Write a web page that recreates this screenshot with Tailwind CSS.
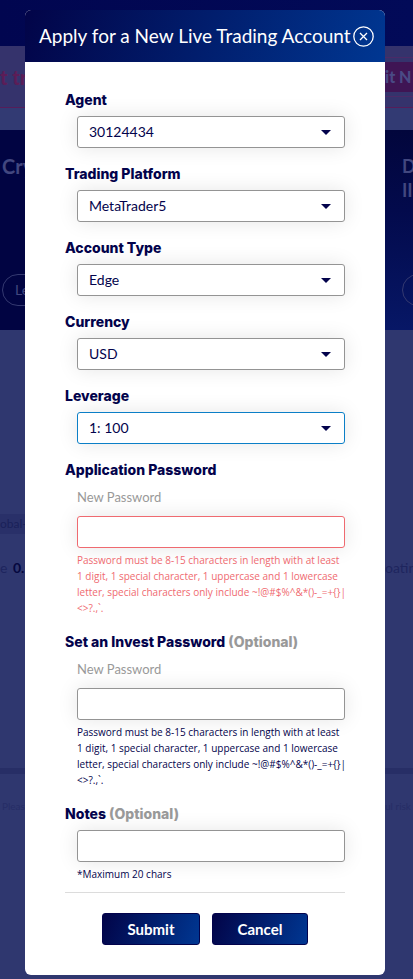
<!DOCTYPE html>
<html lang="en">
  <head>
    <meta charset="UTF-8" />
    <meta name="viewport" content="width=device-width, initial-scale=1.0" />
    <title>Apply for a New Live Trading Account</title>
    <script src="https://cdn.jsdelivr.net/npm/@tailwindcss/browser@4"></script>
  </head>
  <body class="relative min-h-screen bg-[#2f376f] font-['Lato',sans-serif] text-[#03034c]">
    <!-- Dimmed page -->
    <div class="absolute inset-0 overflow-hidden whitespace-nowrap" aria-hidden="true">
      <div class="h-[46px] bg-linear-to-r from-[#010650] to-[#020a58]"></div>
      <div class="flex h-[62px] items-center justify-between border-b border-[#561d5a] bg-[#35336c]">
        <span class="w-[25px] text-xl font-black text-[#5b1d57]">t tr</span>
        <div class="flex h-10 w-7 items-center border-y border-[#4b2a68]">
          <span class="h-[30px] w-full bg-[#3f1554] text-base leading-[30px] font-black text-[#4a4a85]">it N</span>
        </div>
      </div>
      <div class="h-[22px] bg-[#323a73]"></div>
      <div class="flex h-[200px] justify-between bg-[#010442] text-[#42477f]">
        <div class="flex w-[25px] flex-col pt-6 pl-0.5">
          <span class="text-xl leading-6 font-bold">Cry</span>
          <div class="mt-[96px] h-8 w-24 rounded-full border border-[#343970] pl-3 text-sm leading-[30px]">Learn</div>
        </div>
        <div class="flex w-7 flex-col bg-linear-to-b from-[#02063c] via-[#030a4c] via-40% to-[#071766] pt-6 pl-[17px]">
          <span class="text-lg leading-6 font-bold">D</span>
          <span class="text-lg leading-6 font-bold">II</span>
          <div class="mt-[72px] h-8 w-24 rounded-full border border-[#343970]"></div>
        </div>
      </div>
      <div class="mt-[184px] h-5 w-[25px] bg-[#293069] text-xs leading-5 text-[#1a2159]">obal-</div>
      <div class="mt-[22px] flex justify-between text-sm leading-6 text-[#1e255e]">
        <span class="w-[25px]">e <b class="pl-0.5 text-[#05083f]">0.</b></span>
        <span class="w-7">oatin</span>
      </div>
      <div class="mt-[188px] h-1.5 bg-[#272e66]"></div>
      <div class="mt-6 flex justify-between text-[10px] leading-4 text-[#262d66]">
        <span class="w-[25px] pl-0.5">Please</span>
        <span class="w-7">ul risk</span>
      </div>
    </div>

    <!-- Modal -->
    <div class="relative pt-[10px] pr-7 pb-1 pl-[25px]">
      <div role="dialog" aria-labelledby="title" class="overflow-hidden rounded-md bg-white">
        <div class="flex h-[52px] items-center justify-between bg-linear-[110deg] from-[#020448] to-[#003792] pr-[11px] pl-[14px]">
          <h1 id="title" class="text-[19px] leading-6 whitespace-nowrap text-white">Apply for a New Live Trading Account</h1>
          <button type="button" aria-label="Close" class="-ml-1 shrink-0 text-white">
            <svg class="block size-[21px]" viewBox="0 0 21 21" fill="none" stroke="currentColor">
              <circle cx="10.5" cy="10.5" r="9.7" stroke-width="1.3" />
              <path d="M7 7l7 7M14 7l-7 7" stroke-width="1.3" />
            </svg>
          </button>
        </div>

        <form class="px-10 pt-7 pb-[30px]">
          <div class="flex flex-col gap-4">
            <div>
              <label for="agent" class="mb-1.5 block font-['Inter',sans-serif] text-sm leading-5 font-extrabold">Agent</label>
              <div class="relative ml-3">
                <select id="agent" class="block h-8 w-full appearance-none rounded-[3px] border border-[#949494] bg-white px-[11px] text-sm shadow-[0_0_20px_rgba(0,0,0,0.1)] outline-none">
                  <option>30124434</option>
                </select>
                <svg class="pointer-events-none absolute top-[14px] right-[14px] h-[5px] w-[10px]" viewBox="0 0 10 5" fill="currentColor"><path d="M0 0h10L5 5z" /></svg>
              </div>
            </div>
            <div>
              <label for="platform" class="mb-1.5 block font-['Inter',sans-serif] text-sm leading-5 font-extrabold">Trading Platform</label>
              <div class="relative ml-3">
                <select id="platform" class="block h-8 w-full appearance-none rounded-[3px] border border-[#949494] bg-white px-[11px] text-sm shadow-[0_0_20px_rgba(0,0,0,0.1)] outline-none">
                  <option>MetaTrader5</option>
                </select>
                <svg class="pointer-events-none absolute top-[14px] right-[14px] h-[5px] w-[10px]" viewBox="0 0 10 5" fill="currentColor"><path d="M0 0h10L5 5z" /></svg>
              </div>
            </div>
            <div>
              <label for="accountType" class="mb-1.5 block font-['Inter',sans-serif] text-sm leading-5 font-extrabold">Account Type</label>
              <div class="relative ml-3">
                <select id="accountType" class="block h-8 w-full appearance-none rounded-[3px] border border-[#949494] bg-white px-[11px] text-sm shadow-[0_0_20px_rgba(0,0,0,0.1)] outline-none">
                  <option>Edge</option>
                </select>
                <svg class="pointer-events-none absolute top-[14px] right-[14px] h-[5px] w-[10px]" viewBox="0 0 10 5" fill="currentColor"><path d="M0 0h10L5 5z" /></svg>
              </div>
            </div>
            <div>
              <label for="currency" class="mb-1.5 block font-['Inter',sans-serif] text-sm leading-5 font-extrabold">Currency</label>
              <div class="relative ml-3">
                <select id="currency" class="block h-8 w-full appearance-none rounded-[3px] border border-[#949494] bg-white px-[11px] text-sm shadow-[0_0_20px_rgba(0,0,0,0.1)] outline-none">
                  <option>USD</option>
                </select>
                <svg class="pointer-events-none absolute top-[14px] right-[14px] h-[5px] w-[10px]" viewBox="0 0 10 5" fill="currentColor"><path d="M0 0h10L5 5z" /></svg>
              </div>
            </div>
            <div>
              <label for="leverage" class="mb-1.5 block font-['Inter',sans-serif] text-sm leading-5 font-extrabold">Leverage</label>
              <div class="relative ml-3">
                <select id="leverage" class="block h-8 w-full appearance-none rounded-[3px] border border-[#0b7fc7] bg-white px-[11px] text-sm shadow-[0_0_20px_rgba(0,0,0,0.1)] outline-none">
                  <option>1: 100</option>
                </select>
                <svg class="pointer-events-none absolute top-[14px] right-[14px] h-[5px] w-[10px]" viewBox="0 0 10 5" fill="currentColor"><path d="M0 0h10L5 5z" /></svg>
              </div>
            </div>

            <!-- Passwords -->
            <div>
              <h2 class="mb-1.5 font-['Inter',sans-serif] text-sm leading-5 font-extrabold">Application Password</h2>
              <div class="ml-3">
                <label for="appPassword" class="mb-2 block text-[13px] leading-[22px] text-[#999]">New Password</label>
                <input id="appPassword" type="password" class="block h-8 w-full rounded-[3px] border border-[#ef6a70] bg-white px-[11px] text-sm shadow-[0_0_20px_rgba(0,0,0,0.1)] outline-none" />
                <p class="mt-1 font-['Open_Sans',sans-serif] text-[10px] leading-4 whitespace-nowrap text-[#ef6a70]">
                  Password must be 8-15 characters in length with at least<br />1 digit, 1 special character, 1 uppercase and 1 lowercase<br />letter, special characters only include ~!@#$%^&amp;*()-_=+{}|<br />&lt;&gt;?.,`.
                </p>
              </div>
            </div>
            <div>
              <h2 class="mb-1.5 font-['Inter',sans-serif] text-sm leading-5 font-extrabold">Set an Invest Password <span class="text-[#999]">(Optional)</span></h2>
              <div class="ml-3">
                <label for="investPassword" class="mb-2 block text-[13px] leading-[22px] text-[#999]">New Password</label>
                <input id="investPassword" type="password" class="block h-8 w-full rounded-[3px] border border-[#949494] bg-white px-[11px] text-sm shadow-[0_0_20px_rgba(0,0,0,0.1)] outline-none" />
                <p class="mt-1 font-['Open_Sans',sans-serif] text-[10px] leading-4 whitespace-nowrap">
                  Password must be 8-15 characters in length with at least<br />1 digit, 1 special character, 1 uppercase and 1 lowercase<br />letter, special characters only include ~!@#$%^&amp;*()-_=+{}|<br />&lt;&gt;?.,`.
                </p>
              </div>
            </div>
            <div>
              <label for="notes" class="mb-1.5 block font-['Inter',sans-serif] text-sm leading-5 font-extrabold">Notes <span class="text-[#999]">(Optional)</span></label>
              <div class="ml-3">
                <input id="notes" type="text" maxlength="20" class="block h-8 w-full rounded-[3px] border border-[#949494] bg-white px-[11px] text-sm shadow-[0_0_20px_rgba(0,0,0,0.1)] outline-none" />
                <p class="mt-1 font-['Open_Sans',sans-serif] text-[10px] leading-4">*Maximum 20 chars</p>
              </div>
            </div>
          </div>

          <!-- Buttons -->
          <div class="mt-[10px] flex justify-center gap-3 border-t border-[#dcdcdc] pt-5">
            <button type="button" class="h-8 w-[98px] rounded-[3px] border border-[#03034c] bg-linear-[110deg] from-[#020448] to-[#003792] text-[15px] font-bold text-white">Submit</button>
            <button type="button" class="h-8 w-24 rounded-[3px] border border-[#03034c] bg-linear-[110deg] from-[#020448] to-[#003792] text-[15px] font-bold text-white">Cancel</button>
          </div>
        </form>
      </div>
    </div>
  </body>
</html>
